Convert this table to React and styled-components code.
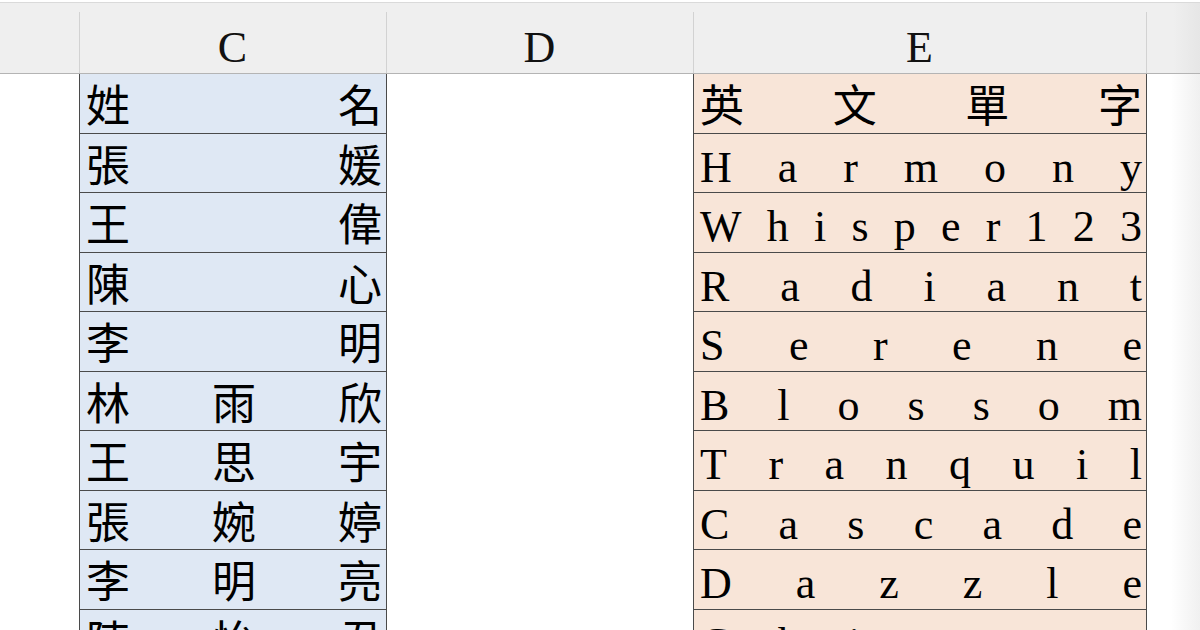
import React from 'react';
import styled, { createGlobalStyle } from 'styled-components';

const names = ['姓名', '張媛', '王偉', '陳心', '李明', '林雨欣', '王思宇', '張婉婷', '李明亮', '陳怡君'];
const words = ['英文單字', 'Harmony', 'Whisper123', 'Radiant', 'Serene', 'Blossom', 'Tranquil', 'Cascade', 'Dazzle', 'Chimera'];

const GlobalStyle = createGlobalStyle`
  html, body {
    margin: 0;
    padding: 0;
    background: #fff;
    overflow: hidden;
  }
  body {
    font-family: "Liberation Serif", "Noto Sans CJK TC", serif;
    color: #000;
  }
`;

const Sheet = styled.div`
  width: 1200px;
  height: 630px;
  overflow: hidden;
  padding-top: 2px;
  box-sizing: border-box;
`;

const HeaderRow = styled.div`
  display: grid;
  grid-template-columns: 79px 307px 307px 453px 1fr;
  height: 72px;
  box-sizing: border-box;
  border-top: 1px solid #dadada;
  border-bottom: 1px solid #b4b4b4;
  background: #efefef;
`;

const ColHead = styled.div`
  display: flex;
  align-items: center;
  justify-content: center;
  font-size: 44px;
  line-height: 1;
  padding-top: 19px;
  color: #111;
  background: ${({ $line }) =>
    $line
      ? 'linear-gradient(#d2d2d2, #d2d2d2) left 9px / 1px 100% no-repeat'
      : 'none'};
  ${({ $fade }) =>
    $fade &&
    `background: linear-gradient(#d2d2d2, #d2d2d2) left 9px / 1px 100% no-repeat,
      linear-gradient(to right, #efefef 50%, #e6e6e6);`}
`;

const Body = styled.div`
  display: flex;
  flex-direction: column;
`;

const Row = styled.div`
  display: grid;
  grid-template-columns: 79px 308px 306px 454px 1fr;
  height: 59.5px;
`;

const Gutter = styled.div`
  background: #fff;
`;

const Filler = styled.div`
  background: linear-gradient(to right, #fff 45%, #f0f0f0);
`;

const Cell = styled.div`
  display: flex;
  justify-content: space-between;
  align-items: center;
  box-sizing: border-box;
  padding: 10px 4px 0 6px;
  font-size: 44px;
  line-height: 1;
  background: ${({ $tint }) => $tint || '#fff'};
  border-left: ${({ $tint }) => ($tint ? '1px solid #4a4a4a' : 'none')};
  border-right: ${({ $tint }) => ($tint ? '1px solid #4a4a4a' : 'none')};
  border-bottom: ${({ $tint }) => ($tint ? '1px solid #4a4a4a' : 'none')};
`;

const Char = styled.span`
  display: block;
  white-space: pre;
`;

const Distributed = ({ text, tint }) => (
  <Cell $tint={tint}>
    {Array.from(text).map((ch, i) => (
      <Char key={i}>{ch}</Char>
    ))}
  </Cell>
);

export default function App() {
  return (
    <>
      <GlobalStyle />
      <Sheet>
        <HeaderRow>
          <ColHead />
          <ColHead $line>C</ColHead>
          <ColHead $line>D</ColHead>
          <ColHead $line>E</ColHead>
          <ColHead $fade />
        </HeaderRow>
        <Body>
          {names.map((name, i) => (
            <Row key={i}>
              <Gutter />
              <Distributed text={name} tint="#dfe8f4" />
              <Cell />
              <Distributed text={words[i]} tint="#f8e5d8" />
              <Filler />
            </Row>
          ))}
        </Body>
      </Sheet>
    </>
  );
}
